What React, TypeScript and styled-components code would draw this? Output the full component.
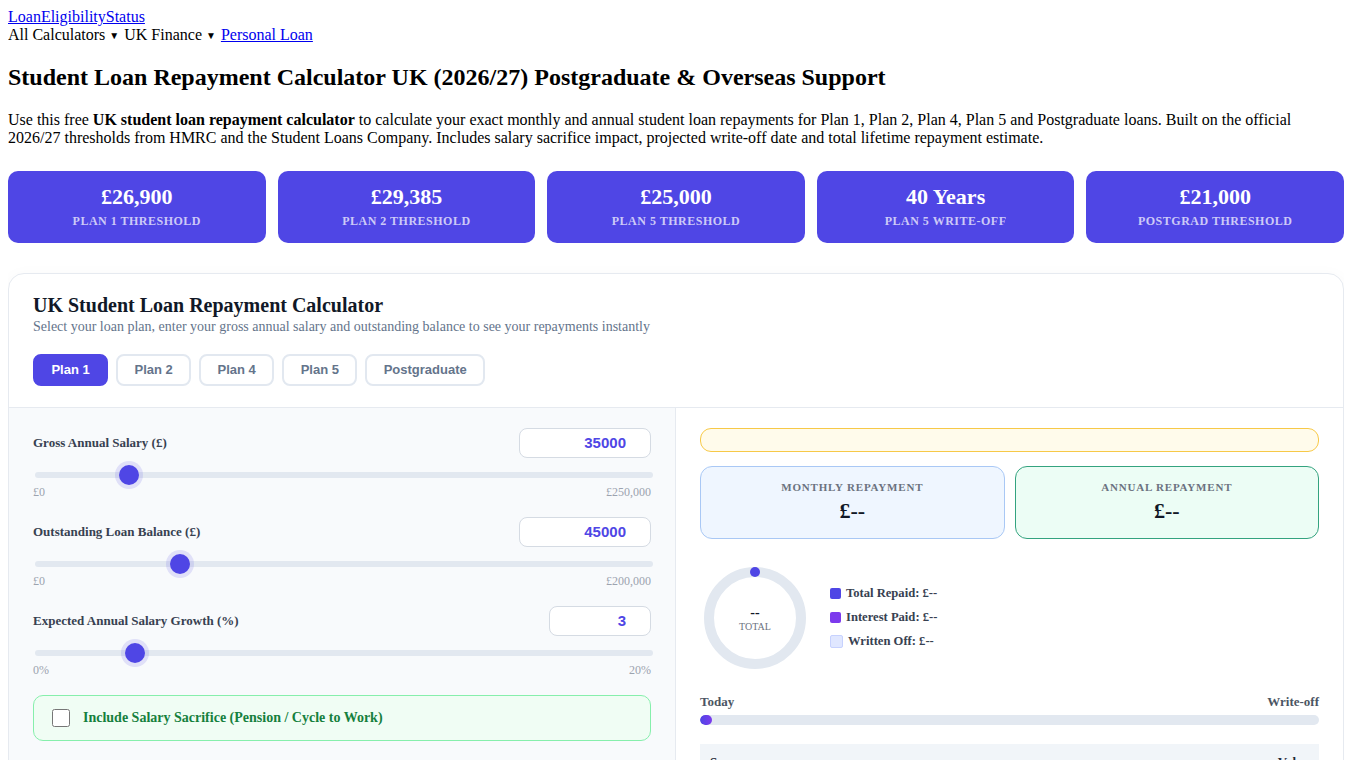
import styled, { createGlobalStyle } from "styled-components";

const GlobalStyle = createGlobalStyle`
    html {
        overflow: hidden;
    }
    body {
        margin: 8px;
        font-family: "Liberation Serif", "Times New Roman", serif;
        font-size: 16px;
        color: #000;
        background: #fff;
    }
`;

const Crumbs = styled.nav`
    line-height: 18px;
    a {
        color: #0000ee;
    }
`;
const Caret = styled.span`
    font-size: 10px;
    margin: 0 5px 0 4px;
    vertical-align: 1px;
`;
const Title = styled.h1`
    font-size: 24px;
    font-weight: bold;
    margin: 19px 0 20px;
`;
const Intro = styled.p`
    margin: 0;
    line-height: 18.4px;
`;

const StatGrid = styled.div`
    display: grid;
    grid-template-columns: repeat(5, 1fr);
    gap: 12px;
    margin-top: 23px;
`;
const StatCard = styled.div`
    background: #4f46e5;
    border-radius: 10px;
    padding: 13px 16px 15px;
    text-align: center;
    color: #fff;
`;
const StatValue = styled.div`
    font-size: 22px;
    font-weight: bold;
    line-height: 26px;
`;
const StatLabel = styled.div`
    margin-top: 4px;
    font-size: 12px;
    line-height: 14px;
    font-weight: bold;
    letter-spacing: 0.5px;
    text-transform: uppercase;
    color: rgba(255, 255, 255, 0.72);
`;

const Calculator = styled.section`
    margin-top: 30px;
    border: 1px solid #e6eaf0;
    border-radius: 16px;
    background: #fff;
    box-shadow: 0 4px 18px rgba(15, 23, 42, 0.04);
    overflow: hidden;
`;
const CalcHeader = styled.header`
    padding: 19px 24px 21px;
    border-bottom: 1px solid #e6eaf0;
`;
const CalcTitle = styled.h2`
    margin: 0;
    font-size: 20px;
    line-height: 24px;
    color: #111827;
`;
const CalcSub = styled.p`
    margin: 2px 0 0;
    font-size: 14px;
    line-height: 16px;
    color: #64748b;
`;
const Tabs = styled.div`
    display: flex;
    gap: 8px;
    margin-top: 19px;
`;
const Tab = styled.button<{ $active?: boolean }>`
    height: 32px;
    padding: 0 16.4px;
    border-radius: 8px;
    border: 2px solid ${(p) => (p.$active ? "#4f46e5" : "#e2e8f0")};
    background: ${(p) => (p.$active ? "#4f46e5" : "#fff")};
    color: ${(p) => (p.$active ? "#fff" : "#64748b")};
    font-family: "Liberation Sans", Arial, sans-serif;
    font-size: 13px;
    font-weight: bold;
    cursor: pointer;
`;

const CalcBody = styled.div`
    display: grid;
    grid-template-columns: 1fr 1fr;
`;
const InputsPane = styled.div`
    background: #f8fafc;
    border-right: 1px solid #e6eaf0;
    padding: 20px 24px 24px;
`;
const ResultsPane = styled.div`
    padding: 20px 24px 24px;
`;

const Field = styled.div`
    margin-bottom: 18px;
`;
const FieldRow = styled.div`
    display: flex;
    align-items: center;
    justify-content: space-between;
    height: 30px;
`;
const FieldLabel = styled.label`
    font-size: 13px;
    font-weight: bold;
    color: #374151;
`;
const NumberBox = styled.input<{ $narrow?: boolean }>`
    box-sizing: border-box;
    width: ${(p) => (p.$narrow ? "102px" : "132px")};
    height: 30px;
    padding: 0 24px 0 10px;
    border: 1px solid #d5dbe3;
    border-radius: 8px;
    background: #fff;
    text-align: right;
    font-family: "Liberation Sans", Arial, sans-serif;
    font-size: 15px;
    font-weight: bold;
    color: #4f46e5;
    outline: none;
`;
const Range = styled.input`
    -webkit-appearance: none;
    appearance: none;
    display: block;
    width: 100%;
    height: 20px;
    margin: 7px 2px 0;
    background: transparent;
    &::-webkit-slider-runnable-track {
        height: 6px;
        border-radius: 3px;
        background: #e2e8f0;
    }
    &::-webkit-slider-thumb {
        -webkit-appearance: none;
        width: 20px;
        height: 20px;
        margin-top: -7px;
        border-radius: 50%;
        background: #4f46e5;
        box-shadow: 0 0 0 4px rgba(79, 70, 229, 0.14);
    }
`;
const RangeEnds = styled.div`
    display: flex;
    justify-content: space-between;
    font-size: 12px;
    line-height: 14px;
    color: #9ca3af;
`;

const SacrificeBox = styled.label`
    display: flex;
    align-items: center;
    gap: 13px;
    height: 44px;
    padding: 0 18px;
    border: 1px solid #86efac;
    border-radius: 10px;
    background: #f0fdf4;
    font-size: 14px;
    font-weight: bold;
    color: #15803d;
    input {
        width: 18px;
        height: 18px;
        margin: 0;
    }
`;

const Notice = styled.div`
    height: 22px;
    border: 1px solid #f7c948;
    border-radius: 11px;
    background: #fffbeb;
`;
const ResultGrid = styled.div`
    display: grid;
    grid-template-columns: 1fr 1fr;
    gap: 10px;
    margin-top: 14px;
`;
const ResultCard = styled.div<{ $tone: "blue" | "green" }>`
    border: 1px solid ${(p) => (p.$tone === "blue" ? "#a9c8f5" : "#34a37f")};
    background: ${(p) => (p.$tone === "blue" ? "#eff6ff" : "#ecfdf5")};
    border-radius: 12px;
    padding: 14px 16px 15px;
    text-align: center;
`;
const ResultLabel = styled.div`
    font-size: 11px;
    line-height: 13px;
    font-weight: bold;
    letter-spacing: 0.8px;
    text-transform: uppercase;
    color: #6b7280;
`;
const ResultValue = styled.div`
    margin-top: 4px;
    font-size: 22px;
    line-height: 25px;
    font-weight: bold;
    color: #111827;
`;

const Breakdown = styled.div`
    display: flex;
    align-items: center;
    gap: 18px;
    margin-top: 24px;
`;
const Donut = styled.div`
    position: relative;
    width: 110px;
    height: 110px;
    flex-shrink: 0;
`;
const DonutCentre = styled.div`
    position: absolute;
    inset: 0;
    display: flex;
    flex-direction: column;
    align-items: center;
    justify-content: center;
    padding-top: 2px;
`;
const DonutValue = styled.div`
    font-size: 14px;
    line-height: 16px;
    font-weight: bold;
    color: #111827;
`;
const DonutCaption = styled.div`
    font-size: 10px;
    line-height: 12px;
    color: #6b7280;
`;
const Legend = styled.ul`
    list-style: none;
    margin: 0;
    padding: 0;
    display: flex;
    flex-direction: column;
    gap: 9px;
`;
const LegendItem = styled.li`
    display: flex;
    align-items: center;
    gap: 5px;
    font-size: 12.6px;
    line-height: 15px;
    font-weight: bold;
    color: #374151;
`;
const Swatch = styled.span<{ $color: string; $outlined?: boolean }>`
    box-sizing: border-box;
    width: ${(p) => (p.$outlined ? "13px" : "11px")};
    height: ${(p) => (p.$outlined ? "13px" : "11px")};
    border-radius: 2px;
    margin-left: 2px;
    background: ${(p) => p.$color};
    border: ${(p) => (p.$outlined ? "1px solid #c7d2fe" : "none")};
`;

const Timeline = styled.div`
    margin-top: 21px;
`;
const TimelineEnds = styled.div`
    display: flex;
    justify-content: space-between;
    font-size: 13px;
    line-height: 15px;
    font-weight: bold;
    color: #4b5563;
`;
const Track = styled.div`
    height: 10px;
    margin-top: 6px;
    border-radius: 5px;
    background: #e2e8f0;
    overflow: hidden;
`;
const Fill = styled.div`
    height: 100%;
    border-radius: 5px;
    background: linear-gradient(90deg, #4f46e5, #7c3aed);
`;

const Summary = styled.table`
    width: 100%;
    margin-top: 19px;
    border-collapse: collapse;
    font-size: 13px;
    th {
        background: #f1f5f9;
        padding: 10px;
        text-align: left;
        color: #1f2937;
    }
    th:last-child,
    td:last-child {
        text-align: right;
    }
    td {
        padding: 9px 10px;
        border-bottom: 1px solid #eef2f7;
        color: #374151;
    }
`;

const stats = [
    { value: "£26,900", label: "Plan 1 Threshold" },
    { value: "£29,385", label: "Plan 2 Threshold" },
    { value: "£25,000", label: "Plan 5 Threshold" },
    { value: "40 Years", label: "Plan 5 Write-off" },
    { value: "£21,000", label: "Postgrad Threshold" },
];

const plans = ["Plan 1", "Plan 2", "Plan 4", "Plan 5", "Postgraduate"];

const fields = [
    { label: "Gross Annual Salary (£)", value: 35000, max: 250000, step: 500, ends: ["£0", "£250,000"] },
    { label: "Outstanding Loan Balance (£)", value: 45000, max: 200000, step: 500, ends: ["£0", "£200,000"] },
    { label: "Expected Annual Salary Growth (%)", value: 3, max: 20, step: 0.5, ends: ["0%", "20%"], narrow: true },
];

export default function App() {
    return (
        <>
            <GlobalStyle />
            <Crumbs>
                <div>
                    <a href="#">LoanEligibilityStatus</a>
                </div>
                <div>
                    All Calculators<Caret>▼</Caret>UK Finance<Caret>▼</Caret>
                    <a href="#">Personal Loan</a>
                </div>
            </Crumbs>

            <Title>Student Loan Repayment Calculator UK (2026/27) Postgraduate &amp; Overseas Support</Title>
            <Intro>
                Use this free <strong>UK student loan repayment calculator</strong> to calculate your exact monthly and
                annual student loan repayments for Plan 1, Plan 2, Plan 4, Plan 5 and Postgraduate loans. Built on the
                official 2026/27 thresholds from HMRC and the Student Loans Company. Includes salary sacrifice impact,
                projected write-off date and total lifetime repayment estimate.
            </Intro>

            <StatGrid>
                {stats.map((s) => (
                    <StatCard key={s.label}>
                        <StatValue>{s.value}</StatValue>
                        <StatLabel>{s.label}</StatLabel>
                    </StatCard>
                ))}
            </StatGrid>

            <Calculator>
                <CalcHeader>
                    <CalcTitle>UK Student Loan Repayment Calculator</CalcTitle>
                    <CalcSub>
                        Select your loan plan, enter your gross annual salary and outstanding balance to see your
                        repayments instantly
                    </CalcSub>
                    <Tabs>
                        {plans.map((p, i) => (
                            <Tab key={p} $active={i === 0}>
                                {p}
                            </Tab>
                        ))}
                    </Tabs>
                </CalcHeader>

                <CalcBody>
                    <InputsPane>
                        {fields.map((f) => (
                            <Field key={f.label}>
                                <FieldRow>
                                    <FieldLabel>{f.label}</FieldLabel>
                                    <NumberBox type="text" defaultValue={f.value} $narrow={f.narrow} />
                                </FieldRow>
                                <Range type="range" min={0} max={f.max} step={f.step} defaultValue={f.value} />
                                <RangeEnds>
                                    <span>{f.ends[0]}</span>
                                    <span>{f.ends[1]}</span>
                                </RangeEnds>
                            </Field>
                        ))}
                        <SacrificeBox>
                            <input type="checkbox" />
                            Include Salary Sacrifice (Pension / Cycle to Work)
                        </SacrificeBox>
                    </InputsPane>

                    <ResultsPane>
                        <Notice />
                        <ResultGrid>
                            <ResultCard $tone="blue">
                                <ResultLabel>Monthly Repayment</ResultLabel>
                                <ResultValue>£--</ResultValue>
                            </ResultCard>
                            <ResultCard $tone="green">
                                <ResultLabel>Annual Repayment</ResultLabel>
                                <ResultValue>£--</ResultValue>
                            </ResultCard>
                        </ResultGrid>

                        <Breakdown>
                            <Donut>
                                <svg width="110" height="110" viewBox="0 0 110 110">
                                    <circle cx="55" cy="55" r="46" fill="none" stroke="#e2e8f0" strokeWidth="10" />
                                    <circle
                                        cx="55"
                                        cy="55"
                                        r="46"
                                        fill="none"
                                        stroke="#4f46e5"
                                        strokeWidth="10"
                                        strokeLinecap="round"
                                        strokeDasharray="0.01 400"
                                        transform="rotate(-90 55 55)"
                                    />
                                </svg>
                                <DonutCentre>
                                    <DonutValue>--</DonutValue>
                                    <DonutCaption>TOTAL</DonutCaption>
                                </DonutCentre>
                            </Donut>
                            <Legend>
                                <LegendItem>
                                    <Swatch $color="#4f46e5" />
                                    Total Repaid: £--
                                </LegendItem>
                                <LegendItem>
                                    <Swatch $color="#7c3aed" />
                                    Interest Paid: £--
                                </LegendItem>
                                <LegendItem>
                                    <Swatch $color="#e0e7ff" $outlined />
                                    Written Off: £--
                                </LegendItem>
                            </Legend>
                        </Breakdown>

                        <Timeline>
                            <TimelineEnds>
                                <span>Today</span>
                                <span>Write-off</span>
                            </TimelineEnds>
                            <Track>
                                <Fill style={{ width: "2%" }} />
                            </Track>
                        </Timeline>

                        <Summary>
                            <thead>
                                <tr>
                                    <th>Summary</th>
                                    <th>Value</th>
                                </tr>
                            </thead>
                            <tbody>
                                <tr>
                                    <td>Repayment threshold</td>
                                    <td>£26,900</td>
                                </tr>
                                <tr>
                                    <td>Repayment rate</td>
                                    <td>9%</td>
                                </tr>
                                <tr>
                                    <td>Projected write-off</td>
                                    <td>--</td>
                                </tr>
                            </tbody>
                        </Summary>
                    </ResultsPane>
                </CalcBody>
            </Calculator>
        </>
    );
}
